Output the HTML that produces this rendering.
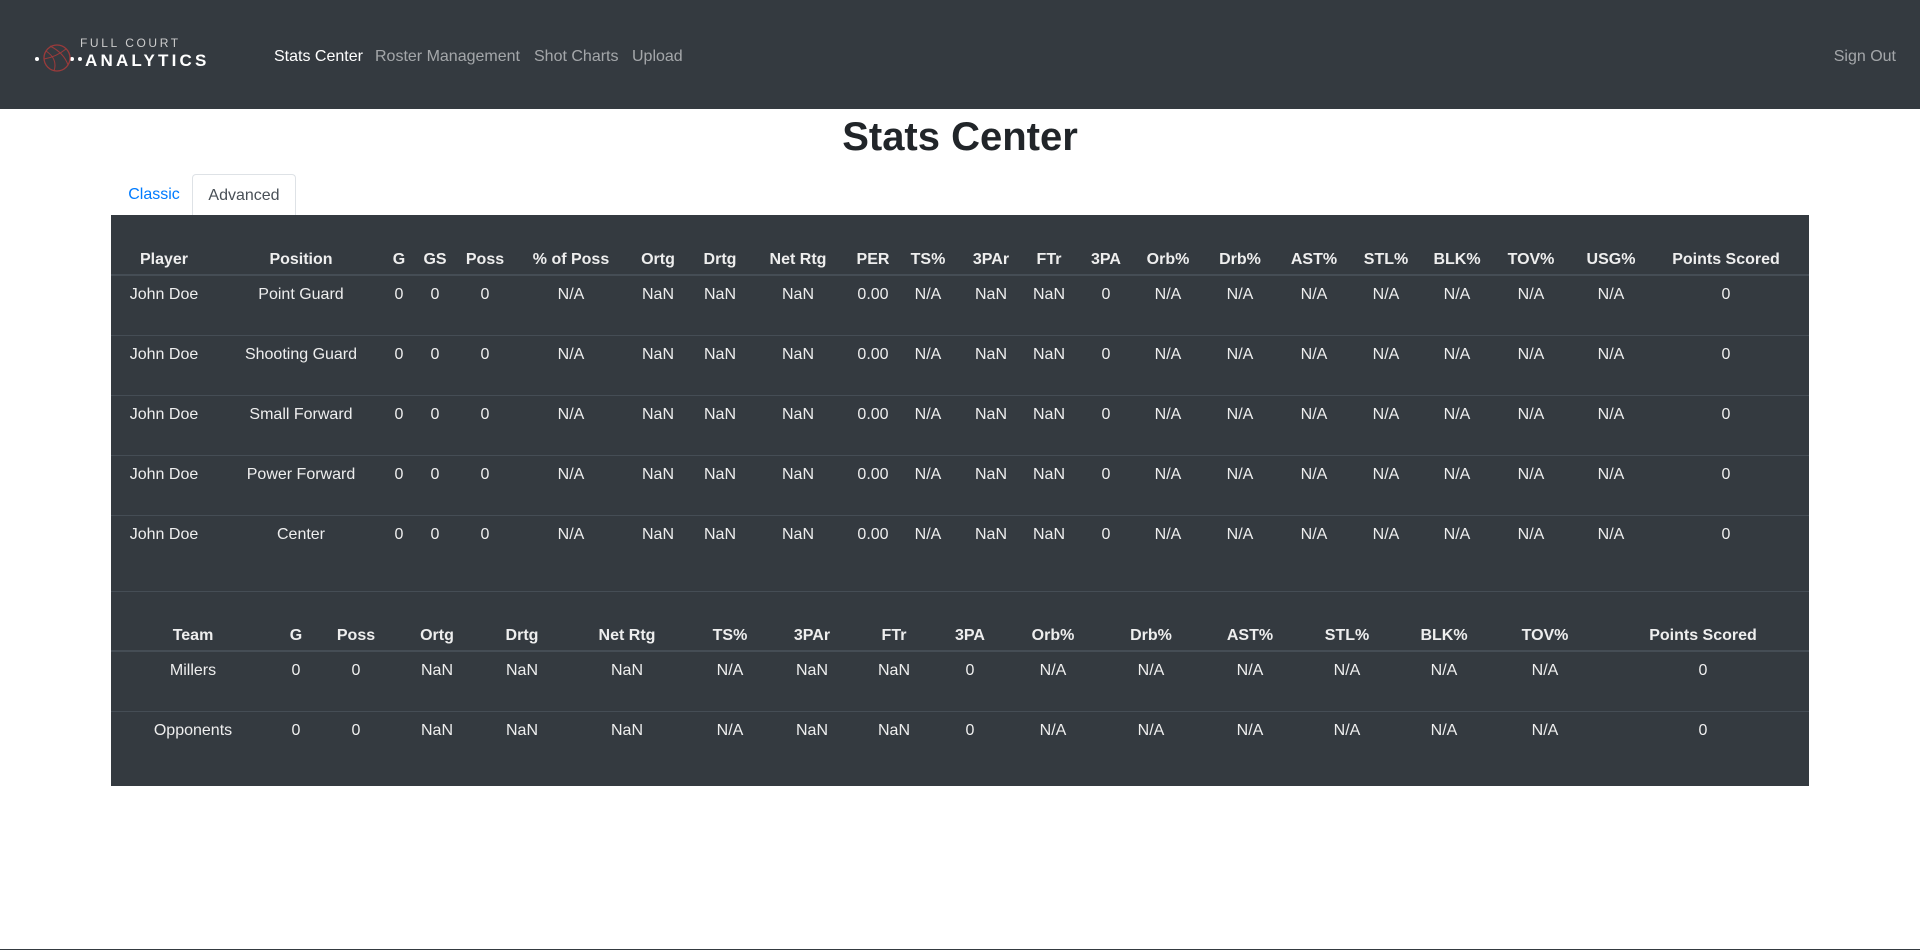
<!DOCTYPE html>
<html><head><meta charset="utf-8"><style>
*{box-sizing:border-box;margin:0;padding:0}
body{width:1920px;height:950px;background:#fff;font-family:"Liberation Sans",sans-serif;position:relative;overflow:hidden;color:#212529}
nav{position:absolute;left:0;top:0;width:1920px;height:109px;background:#343a40}
.lnk{position:absolute;top:48px;font-size:16px;color:rgba(255,255,255,.55);white-space:nowrap}
h1{position:absolute;top:115px;left:0;width:1920px;text-align:center;font-size:40px;font-weight:bold;color:#212529}
.tab{position:absolute;top:174px;height:41px;font-size:16px;line-height:42px;text-align:center}
.box{position:absolute;left:111px;top:215px;width:1698px;height:571px;background:#343a40}
table{border-collapse:collapse;table-layout:fixed;color:#eee;font-size:16px;position:absolute;left:0}
th{font-weight:bold;height:60px;vertical-align:bottom;padding-bottom:5px;border-bottom:2px solid #454d55;text-align:center;white-space:nowrap}
td{height:60px;vertical-align:top;padding-top:10px;border-top:1px solid #454d55;text-align:center;white-space:nowrap}
tr:nth-child(2) td{border-top:none}
</style></head><body>
<nav>
<svg style="position:absolute;left:30px;top:30px" width="190" height="50">
<circle cx="7" cy="29" r="2" fill="#fff"/>
<circle cx="42" cy="29" r="2" fill="#fff"/>
<circle cx="50" cy="29" r="2" fill="#fff"/>
<circle cx="27" cy="28" r="13" fill="none" stroke="#9b3b3b" stroke-width="1.3"/>
<path d="M16 21 Q28 29 24 41 M20 16 Q34 23 38 35 M14 29 Q26 27 36 19" fill="none" stroke="#9b3b3b" stroke-width="1"/>
<text x="50" y="17" fill="#ccc" font-family="Liberation Sans" font-size="12" letter-spacing="2.6">FULL COURT</text>
<text x="55" y="36" fill="#fff" font-family="Liberation Sans" font-size="17" font-weight="bold" letter-spacing="3.2">ANALYTICS</text>
</svg>
<span class="lnk" style="left:274px;color:#fff">Stats Center</span>
<span class="lnk" style="left:375px">Roster Management</span>
<span class="lnk" style="left:534px">Shot Charts</span>
<span class="lnk" style="left:632px">Upload</span>
<span class="lnk" style="right:24px">Sign Out</span>
</nav>
<h1>Stats Center</h1>
<div class="tab" style="left:118px;width:72px;color:#007bff">Classic</div>
<div class="tab" style="left:192px;width:104px;border:1px solid #dee2e6;border-bottom:none;border-radius:4px 4px 0 0;color:#495057;background:#fff">Advanced</div>
<div class="box">
<table style="top:0;width:1698px">
<colgroup><col style="width:106px"><col style="width:168px"><col style="width:28px"><col style="width:44px"><col style="width:56px"><col style="width:116px"><col style="width:58px"><col style="width:66px"><col style="width:90px"><col style="width:60px"><col style="width:50px"><col style="width:76px"><col style="width:40px"><col style="width:74px"><col style="width:50px"><col style="width:94px"><col style="width:54px"><col style="width:90px"><col style="width:52px"><col style="width:96px"><col style="width:64px"><col style="width:166px"></colgroup>
<tr><th>Player</th><th>Position</th><th>G</th><th>GS</th><th>Poss</th><th>% of Poss</th><th>Ortg</th><th>Drtg</th><th>Net Rtg</th><th>PER</th><th>TS%</th><th>3PAr</th><th>FTr</th><th>3PA</th><th>Orb%</th><th>Drb%</th><th>AST%</th><th>STL%</th><th>BLK%</th><th>TOV%</th><th>USG%</th><th>Points Scored</th></tr>
<tr><td>John Doe</td><td>Point Guard</td><td>0</td><td>0</td><td>0</td><td>N/A</td><td>NaN</td><td>NaN</td><td>NaN</td><td>0.00</td><td>N/A</td><td>NaN</td><td>NaN</td><td>0</td><td>N/A</td><td>N/A</td><td>N/A</td><td>N/A</td><td>N/A</td><td>N/A</td><td>N/A</td><td>0</td></tr>
<tr><td>John Doe</td><td>Shooting Guard</td><td>0</td><td>0</td><td>0</td><td>N/A</td><td>NaN</td><td>NaN</td><td>NaN</td><td>0.00</td><td>N/A</td><td>NaN</td><td>NaN</td><td>0</td><td>N/A</td><td>N/A</td><td>N/A</td><td>N/A</td><td>N/A</td><td>N/A</td><td>N/A</td><td>0</td></tr>
<tr><td>John Doe</td><td>Small Forward</td><td>0</td><td>0</td><td>0</td><td>N/A</td><td>NaN</td><td>NaN</td><td>NaN</td><td>0.00</td><td>N/A</td><td>NaN</td><td>NaN</td><td>0</td><td>N/A</td><td>N/A</td><td>N/A</td><td>N/A</td><td>N/A</td><td>N/A</td><td>N/A</td><td>0</td></tr>
<tr><td>John Doe</td><td>Power Forward</td><td>0</td><td>0</td><td>0</td><td>N/A</td><td>NaN</td><td>NaN</td><td>NaN</td><td>0.00</td><td>N/A</td><td>NaN</td><td>NaN</td><td>0</td><td>N/A</td><td>N/A</td><td>N/A</td><td>N/A</td><td>N/A</td><td>N/A</td><td>N/A</td><td>0</td></tr>
<tr><td>John Doe</td><td>Center</td><td>0</td><td>0</td><td>0</td><td>N/A</td><td>NaN</td><td>NaN</td><td>NaN</td><td>0.00</td><td>N/A</td><td>NaN</td><td>NaN</td><td>0</td><td>N/A</td><td>N/A</td><td>N/A</td><td>N/A</td><td>N/A</td><td>N/A</td><td>N/A</td><td>0</td></tr>
</table>
<div style="position:absolute;left:0;top:376px;width:1698px;height:1px;background:#454d55"></div>
<table style="top:376px;width:1698px">
<colgroup><col style="width:164px"><col style="width:42px"><col style="width:78px"><col style="width:84px"><col style="width:86px"><col style="width:124px"><col style="width:82px"><col style="width:82px"><col style="width:82px"><col style="width:70px"><col style="width:96px"><col style="width:100px"><col style="width:98px"><col style="width:96px"><col style="width:98px"><col style="width:104px"><col style="width:212px"></colgroup>
<tr><th>Team</th><th>G</th><th>Poss</th><th>Ortg</th><th>Drtg</th><th>Net Rtg</th><th>TS%</th><th>3PAr</th><th>FTr</th><th>3PA</th><th>Orb%</th><th>Drb%</th><th>AST%</th><th>STL%</th><th>BLK%</th><th>TOV%</th><th>Points Scored</th></tr>
<tr><td>Millers</td><td>0</td><td>0</td><td>NaN</td><td>NaN</td><td>NaN</td><td>N/A</td><td>NaN</td><td>NaN</td><td>0</td><td>N/A</td><td>N/A</td><td>N/A</td><td>N/A</td><td>N/A</td><td>N/A</td><td>0</td></tr>
<tr><td>Opponents</td><td>0</td><td>0</td><td>NaN</td><td>NaN</td><td>NaN</td><td>N/A</td><td>NaN</td><td>NaN</td><td>0</td><td>N/A</td><td>N/A</td><td>N/A</td><td>N/A</td><td>N/A</td><td>N/A</td><td>0</td></tr>
</table>
</div>
<div style="position:absolute;left:0;top:949px;width:1920px;height:1px;background:#343a40"></div>
</body></html>
